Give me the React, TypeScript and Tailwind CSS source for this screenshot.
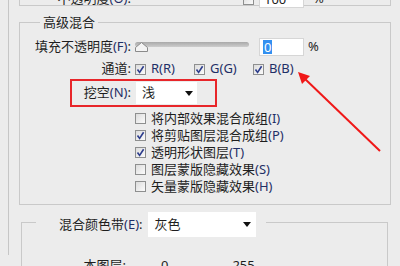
import React from "react";

const FONT = { fontFamily: '"Noto Sans", "Noto Sans CJK SC", sans-serif' };

function Label({ text, mnemonic }: { text: string; mnemonic?: string }) {
  return (
    <span className="whitespace-nowrap">
      {text}
      {mnemonic && <span className="text-[#1f2f66]">({mnemonic})</span>}
    </span>
  );
}

function Check({ checked }: { checked?: boolean }) {
  return (
    <span className="relative inline-block size-[11px] shrink-0 border border-[#8e8f8f] bg-gradient-to-br from-[#dcdcdc] to-[#fbfbfb]">
      {checked && (
        <svg viewBox="0 0 11 11" className="absolute -left-px -top-px size-[11px]">
          <path d="M2.5 5.5 L4.6 8.4 L8.6 2.2" fill="none" stroke="#2c3c8c" strokeWidth="1.6" />
        </svg>
      )}
    </span>
  );
}

function Arrow() {
  return (
    <svg width="8" height="5" viewBox="0 0 8 5" className="shrink-0">
      <path d="M0 0 H8 L4 5 Z" fill="#111" />
    </svg>
  );
}

export default function App() {
  const options: Array<[string, string, boolean]> = [
    ["将内部效果混合成组", "I", false],
    ["将剪贴图层混合成组", "P", true],
    ["透明形状图层", "T", true],
    ["图层蒙版隐藏效果", "S", false],
    ["矢量蒙版隐藏效果", "H", false],
  ];

  return (
    <div className="relative h-[266px] w-[400px] overflow-hidden bg-[#ececec] pl-[8px] text-[13px] text-[#1e1e1e]" style={FONT}>
      <div className="h-full border-l border-[#c6c6c6] pl-[10px]">
        {/* Normal blending (cut off at top) */}
        <div className="h-[17px] w-[372px] border-x border-b border-[#c9c9c9]">
          <div className="-mt-[11px] flex h-[20px] items-center">
            <div className="w-[111px] text-right">
              <Label text="不透明度" mnemonic="O" />:
            </div>
            <div className="w-[112px]" />
            <Check />
            <div className="ml-[5px] h-[18px] w-[45px] border border-[#d6d6d6] bg-white pl-[4px] leading-[16px]">100</div>
            <span className="ml-[9px]">%</span>
          </div>
        </div>

        {/* Advanced blending */}
        <div className="relative mt-[16px] h-[183px] w-[372px] border border-[#c9c9c9]">
          <span className="absolute -top-[11px] left-[20px] bg-[#ececec] px-[3px] leading-[20px]">高级混合</span>

          <div className="mt-[14px] flex h-[20px] items-center">
            <div className="w-[111px] text-right">
              <Label text="填充不透明度" mnemonic="F" />:
            </div>
            <div className="relative ml-[4px] h-[20px] w-[114px]">
              <div className="absolute left-0 right-0 top-[5px] h-[5px] rounded-full bg-gradient-to-b from-[#a9a9a9] to-[#cdcdcd]" />
              <svg width="13" height="10" viewBox="0 0 13 10" className="absolute left-0 top-[5px]">
                <path d="M0.5 9.5 V5.5 L6.5 0.5 L12.5 5.5 V9.5 Z" fill="#f4f4f4" stroke="#8a8a8a" />
              </svg>
            </div>
            <div className="ml-[10px] flex h-[18px] w-[45px] items-center border border-[#d6d6d6] bg-white pl-[3px]">
              <span className="bg-[#3390f0] px-px leading-[14px] text-white">0</span>
            </div>
            <span className="ml-[4px]">%</span>
          </div>

          <div className="mt-[2px] flex h-[20px] items-center">
            <div className="w-[111px] text-right">通道:</div>
            {[
              ["R", "R"],
              ["G", "G"],
              ["B", "B"],
            ].map(([c, m]) => (
              <div key={c} className="ml-[4px] flex w-[55px] items-center gap-[5px]">
                <Check checked />
                <span className="text-[#1f2f66]">
                  {c}({m})
                </span>
              </div>
            ))}
          </div>

          <div className="ml-[50px] flex h-[28px] w-[147px] items-center border-2 border-[#e8262a]">
            <div className="w-[59px] text-right">
              <Label text="挖空" mnemonic="N" />:
            </div>
            <div className="ml-[5px] flex h-[22px] w-[61px] items-center justify-between bg-white pl-[6px] pr-[4px]">
              <span>浅</span>
              <Arrow />
            </div>
          </div>

          <div className="mt-[3px] flex flex-col pl-[115px]">
            {options.map(([t, m, c]) => (
              <div key={t} className="flex h-[17px] items-center gap-[5px]">
                <Check checked={c} />
                <Label text={t} mnemonic={m} />
              </div>
            ))}
          </div>
        </div>

        {/* Blend if */}
        <div className="relative ml-[2px] mt-[17px] h-[60px] w-[367px] border-x border-t border-[#c9c9c9]">
          <div className="absolute -top-[11px] left-[14px] flex h-[25px] w-[230px] items-center bg-[#ececec] pl-[23px]">
            <span>
              <Label text="混合颜色带" mnemonic="E" />:
            </span>
            <div className="ml-[5px] flex h-[25px] w-[108px] items-center justify-between bg-white pl-[7px] pr-[5px]">
              <span>灰色</span>
              <Arrow />
            </div>
          </div>
          <div className="mt-[34px] flex h-[18px] items-center">
            <div className="w-[104px] text-right">本图层:</div>
            <span className="ml-[35px]">0</span>
            <span className="ml-[64px]">255</span>
          </div>
        </div>
      </div>

      {/* Annotation arrow */}
      <svg className="pointer-events-none absolute left-0 top-0" width="400" height="266">
        <line x1="380" y1="151" x2="303" y2="77" stroke="#f01818" strokeWidth="2" />
        <path d="M298 72 L310 76 L302 84 Z" fill="#f01818" />
      </svg>
    </div>
  );
}
